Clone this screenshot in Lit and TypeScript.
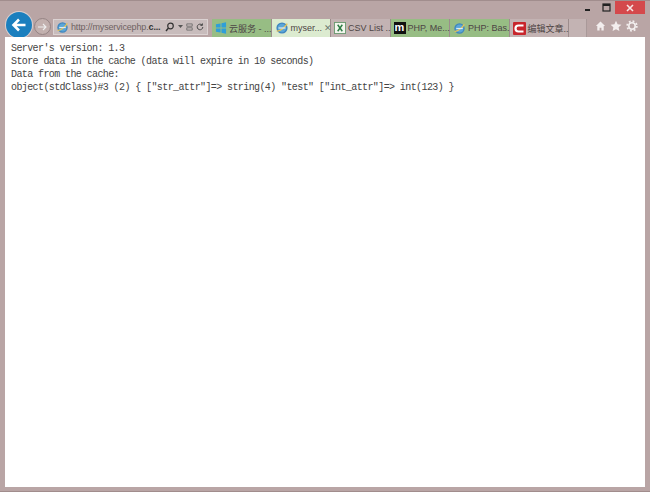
import { LitElement, html, css } from "lit";
import { customElement } from "lit/decorators.js";

const ie = (s = 14) => html`<svg class="ic" width=${s} height=${s} viewBox="0 0 16 16">
  <circle cx="8" cy="8" r="5.6" fill="#5aa6d8" stroke="#3f86bf" stroke-width="1.6"/>
  <path d="M2 11.5C5 12 11 8 14 3" fill="none" stroke="#e3c35a" stroke-width="1.6"/>
  <path d="M4 8h8" stroke="#dcecf5" stroke-width="1.4"/></svg>`;

const tabs = [
  { t: "云服务 - ...", c: "g", i: html`<svg class="ic" width="12" height="12" viewBox="0 0 13 13"><path d="M1 2.500l5-1v4.500H1zM7 1.300l5-1V6H7zM1 7h5v4.500l-5-1zM7 7h5v5.700l-5-1z" fill="#2f9fd8"/></svg>` },
  { t: "myser...", c: "a", i: ie(14), x: true },
  { t: "CSV List ...", c: "n", i: html`<svg class="ic" width="12" height="12" viewBox="0 0 13 13"><rect x=".5" y=".5" width="12" height="12" fill="#f3f6ee" stroke="#6d9a72"/><path d="M4 3l5 7M9 3l-5 7" stroke="#2e7d46" stroke-width="1.600"/></svg>` },
  { t: "PHP, Me...", c: "g", i: html`<span class="m">m</span>` },
  { t: "PHP: Bas...", c: "g", i: ie(13) },
  { t: "编辑文章...", c: "n", i: html`<svg class="ic" width="13" height="13" viewBox="0 0 13 13"><rect width="13" height="13" rx="1" fill="#c8252c"/><path d="M10.500 3.500H5.500a3 3 0 0 0 0 6h5" fill="none" stroke="#fff" stroke-width="2.200"/></svg>` },
];

@customElement("app-root")
export class AppRoot extends LitElement {
  static styles = css`
    :host { display: block; width: 650px; height: 492px; overflow: hidden; }
    .win { box-sizing: border-box; width: 650px; height: 492px; background: #b9a5a5; display: flex; flex-direction: column;
      padding: 0 5px 4px; border-top: 1px solid #a18d8d; border-bottom: 1px solid #a18d8d; font-family: "Liberation Sans", "Noto Sans CJK SC", sans-serif; }
    .title { height: 13px; display: flex; justify-content: flex-end; align-items: flex-start; flex: none; }
    .wb { width: 18px; height: 13px; display: flex; align-items: center; justify-content: center; }
    .close { width: 30px; height: 13px; background: #d4494c; display: flex; align-items: center; justify-content: center; }
    .bar { height: 23px; flex: none; display: flex; align-items: flex-end; }
    .back { width: 26px; height: 26px; margin: 0 2px -1px 1px; border-radius: 50%; background: #1a7fbe; display: flex; align-items: center; justify-content: center; flex: none; box-shadow: 0 0 0 1px #d9cfcf; }
    .fwd { width: 15px; height: 15px; border-radius: 50%; border: 1px solid #958484; background: #c2b0ae; margin: 0 2px 2px 0; display: flex; align-items: center; justify-content: center; flex: none; }
    .addr { width: 155px; height: 16px; box-sizing: border-box; margin: 0 4px 2px 0; background: #c8bcbc; border: 1px solid #dbd2d2; display: flex; align-items: center; gap: 2px; padding-left: 2px; font-size: 9px; letter-spacing: -0.15px; color: #6f6262; flex: none; white-space: nowrap; }
    .addr b { color: #333; }
    .addr .sp { flex: 1; }
    .addr .tools { display: flex; gap: 3px; align-items: center; padding-right: 3px; }
    .tabs { display: flex; height: 18px; flex: none; align-items: stretch; }
    .tab { width: 59.500px; box-sizing: border-box; display: flex; align-items: center; gap: 2px; padding-left: 3px; font-size: 9px; white-space: nowrap; color: #4d4444; border-right: 1px solid #9c8c8c; }
    .g { background: #97bd84; }
    .a { background: #dcebd0; }
    .n { background: #c3b3b3; }
    .new { width: 18px; background: #c3b3b3; border-right: 1px solid #a99999; box-sizing: border-box; }
    .ic { flex: none; display: block; }
    .m { width: 12px; height: 12px; background: #111; color: #fff; font-weight: 700; font-size: 11px; line-height: 11px; text-align: center; flex: none; }
    .x { margin-left: auto; margin-right: 3px; color: #6f7c72; font-size: 9px; }
    .right { flex: 1; display: flex; justify-content: flex-end; gap: 4px; align-items: center; padding-right: 7px; height: 23px; }
    .page { flex: 1; background: #fff; padding: 5px 6px; font: 10px/13px "Liberation Mono", monospace; letter-spacing: -0.6px; color: #444; white-space: pre; }
  `;
  render() {
    return html`<div class="win">
      <div class="title">
        <div class="wb"><svg width="8" height="8" viewBox="0 0 8 8"><rect x="1" y="5" width="5" height="2" fill="#222"/></svg></div>
        <div class="wb"><svg width="9" height="9" viewBox="0 0 9 9"><rect x="1" y="1" width="7" height="7" fill="none" stroke="#222" stroke-width="1.200"/><rect x="1" y="1" width="7" height="2" fill="#222"/></svg></div>
        <div class="close"><svg width="8" height="8" viewBox="0 0 8 8"><path d="M1 1l6 6M7 1L1 7" stroke="#f6e4e4" stroke-width="1.600"/></svg></div>
      </div>
      <div class="bar">
        <div class="back"><svg width="16" height="14" viewBox="0 0 16 14"><path d="M14.500 7H3M8 1.500L2.500 7 8 12.500" fill="none" stroke="#fff" stroke-width="2.600"/></svg></div>
        <div class="fwd"><svg width="11" height="10" viewBox="0 0 11 10"><path d="M1 5h8M6 2l3 3-3 3" fill="none" stroke="#eee" stroke-width="1.100"/></svg></div>
        <div class="addr">
          ${ie(13)}<span>http://myservicephp.<b>c...</b></span><span class="sp"></span>
          <span class="tools">
            <svg width="10" height="10" viewBox="0 0 10 10"><circle cx="5.500" cy="4" r="2.800" fill="none" stroke="#333" stroke-width="1.200"/><path d="M3.500 6L1 9" stroke="#333" stroke-width="1.400"/></svg>
            <svg width="5" height="4" viewBox="0 0 5 4"><path d="M0 0h5L2.500 3z" fill="#555"/></svg>
            <svg width="7" height="10" viewBox="0 0 9 10"><path d="M1 1h7v3H1zM1 6h7v3H1z" fill="none" stroke="#666"/></svg>
            <svg width="8" height="10" viewBox="0 0 10 10"><path d="M8.500 5a3.500 3.500 0 1 1-1-2.500M8 .5v2.500H5.500" fill="none" stroke="#444" stroke-width="1.200"/></svg>
          </span>
        </div>
        <div class="tabs">
          ${tabs.map(t => html`<div class="tab ${t.c}">${t.i}<span>${t.t}</span>${t.x ? html`<span class="x">✕</span>` : ""}</div>`)}
          <div class="new"></div>
        </div>
        <div class="right">
          <svg width="11" height="12" viewBox="0 0 12 12"><path d="M6 1L1 6h1.500v5h2.500V8h2v3h2.500V6H11z" fill="#f3eeee"/></svg>
          <svg width="12" height="12" viewBox="0 0 12 12"><path d="M6 .8l1.600 3.500 3.800.4-2.800 2.600.8 3.800L6 9.200l-3.400 1.900.8-3.800L.6 4.700l3.800-.4z" fill="#f3eeee"/></svg>
          <svg width="12" height="12" viewBox="0 0 12 12"><circle cx="6" cy="6" r="3.200" fill="none" stroke="#f3eeee" stroke-width="1.600"/><circle cx="6" cy="6" r="4.800" fill="none" stroke="#f3eeee" stroke-width="1.800" stroke-dasharray="1.800 1.970"/></svg>
        </div>
      </div>
      <div class="page">Server's version: 1.3
Store data in the cache (data will expire in 10 seconds)
Data from the cache:
object(stdClass)#3 (2) { ["str_attr"]=> string(4) "test" ["int_attr"]=> int(123) }</div>
    </div>`;
  }
}
